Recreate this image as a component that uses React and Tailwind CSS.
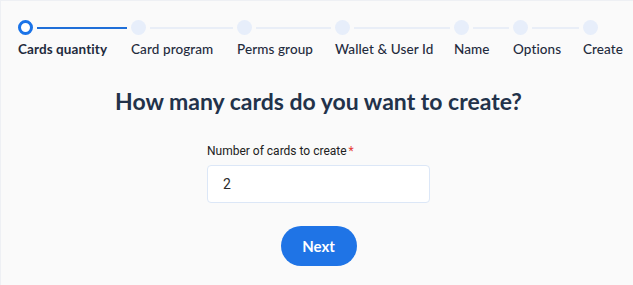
const STEPS = [
  { label: 'Cards quantity', width: 'w-[113px]' },
  { label: 'Card program', width: 'w-[106px]' },
  { label: 'Perms group', width: 'w-[98px]' },
  { label: 'Wallet & User Id', width: 'w-[119px]' },
  { label: 'Name', width: 'w-[59px]' },
  { label: 'Options', width: 'w-[70px]' },
  { label: 'Create', width: '' },
]

function Stepper({ current = 0 }) {
  return (
    <div className="flex">
      {STEPS.map((step, i) => {
        const active = i === current
        const done = i < current
        const last = i === STEPS.length - 1
        return (
          <div key={step.label} className={'flex flex-col ' + step.width}>
            <div className="flex items-center h-[15px]">
              {active ? (
                <span className="w-[15px] h-[15px] rounded-full border-[3px] border-[#1a73e8] bg-white shrink-0" />
              ) : (
                <span className={'w-[15px] h-[15px] rounded-full shrink-0 ' + (done ? 'bg-[#1a73e8]' : 'bg-[#e7eefa]')} />
              )}
              {!last && (
                <span className={'flex-1 h-[2px] mx-1 ' + (active || done ? 'bg-[#1f6fd8]' : 'bg-[#e9eef7]')} />
              )}
            </div>
            <span
              className={'mt-1 text-[13.5px] leading-5 whitespace-nowrap text-[#1f2b3d] tracking-[0.1px] ' + (active ? 'font-bold' : 'font-medium')}
            >
              {step.label}
            </span>
          </div>
        )
      })}
    </div>
  )
}

export default function App() {
  return (
    <div
      className="w-full h-[285px] bg-[#fafafa] border-t border-l border-[#eef0f4] pt-[19px] pl-[17px] overflow-hidden"
      style={{ fontFamily: 'Lato, "Open Sans", sans-serif' }}
    >
      <Stepper current={0} />

      <div className="flex flex-col items-center pl-1 pr-[18px] mt-[26px]">
        <h1 className="text-[23px] leading-8 font-bold text-[#22324a]">
          How many cards do you want to create?
        </h1>

        <div className="w-[223px] mt-[26px]" style={{ fontFamily: 'Roboto, sans-serif' }}>
          <label className="block text-[12px] leading-4 text-[#212121]">
            Number of cards to create<span className="text-[#e53935] ml-[2px]">*</span>
          </label>
          <input
            type="text"
            defaultValue="2"
            className="mt-[6px] w-full h-[38px] px-[15px] bg-white border border-[#dce7f7] rounded-[4px] text-[14px] text-[#2b2b2b] outline-none"
          />
        </div>

        <button className="mt-[23px] w-[76px] h-10 rounded-full bg-[#1f74e6] text-white text-[15px] font-bold">
          Next
        </button>
      </div>
    </div>
  )
}
